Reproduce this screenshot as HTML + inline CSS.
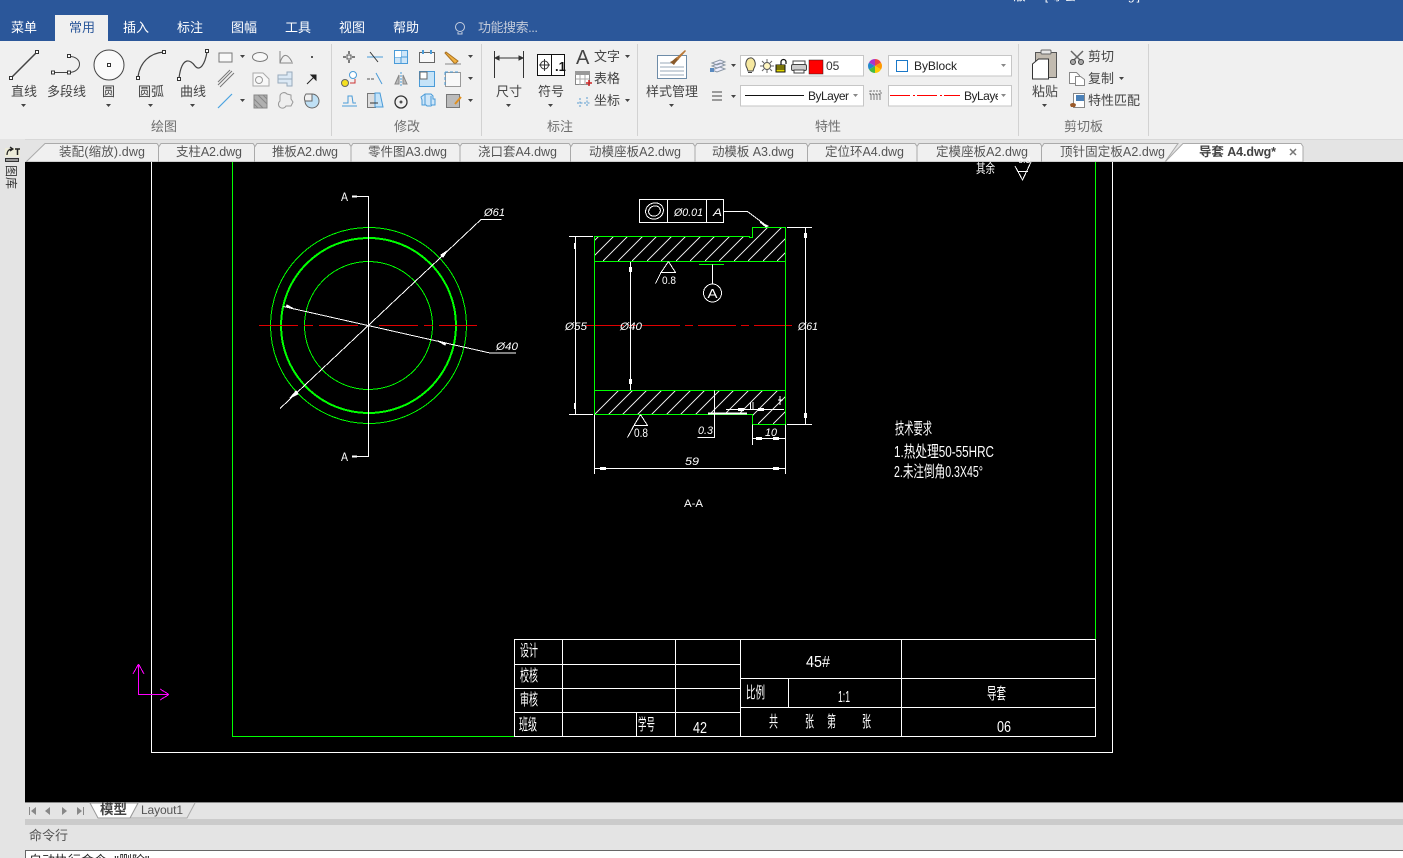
<!DOCTYPE html>
<html lang="zh"><head><meta charset="utf-8"><title>导套 A4.dwg</title>
<style>
html,body{margin:0;padding:0;background:#000;overflow:hidden}
svg{display:block}
text{font-family:"Liberation Sans","Noto Sans CJK SC",sans-serif}
.m{font-size:13px;fill:#fff}
.r{font-size:13px;fill:#444}
.g{font-size:13px;fill:#6e6e6e}
.t{font-size:12.5px;fill:#555}
.b{font-size:12px;fill:#222}
.c{font-size:16px;fill:#fff}
.d{font-size:11px;fill:#fff;font-style:italic}
.k{font-size:12px;fill:#fff}
.cad line,.cad path,.cad rect,.cad circle,.cad ellipse{shape-rendering:crispEdges}
.w{stroke:#fff;stroke-width:1;fill:none}
.gr{stroke:#0f0;stroke-width:1;fill:none}
.gt{stroke:#0f0;stroke-width:2;fill:none}
.i{fill:none;stroke:#444;stroke-width:1}
.bl{fill:none;stroke:#4a9bd8;stroke-width:1}
</style></head>
<body>
<svg xmlns="http://www.w3.org/2000/svg" width="1403" height="858" viewBox="0 0 1403 858">
<!-- title bar -->
<rect width="1403" height="41" fill="#2b579a"/>
<text x="973" y="0" font-size="12" fill="#fff" textLength="167" lengthAdjust="spacing">2017 版 - [导套 A4.dwg]</text>
<rect x="55" y="15" width="53" height="27" fill="#f0f0f0"/>
<text class="m" x="11" y="32">菜单</text>
<text class="m" x="69" y="32" style="fill:#2b579a">常用</text>
<text class="m" x="123" y="32">插入</text>
<text class="m" x="177" y="32">标注</text>
<text class="m" x="231" y="32">图幅</text>
<text class="m" x="285" y="32">工具</text>
<text class="m" x="339" y="32">视图</text>
<text class="m" x="393" y="32">帮助</text>
<g fill="none" stroke="#c5cede"><circle cx="460" cy="27" r="4.5"/><path d="M458 32v2h4v-2"/></g>
<text class="m" x="478" y="32" style="fill:#c3cbda" textLength="60">功能搜索...</text>

<!-- ribbon -->
<rect y="41" width="1403" height="98" fill="#f0f0f0"/>
<g fill="#d2d2d2"><rect x="331" y="44" width="1" height="92"/><rect x="481" y="44" width="1" height="92"/><rect x="637" y="44" width="1" height="92"/><rect x="1018" y="44" width="1" height="92"/><rect x="1148" y="44" width="1" height="92"/></g>

<!-- draw group -->
<g fill="none" stroke="#444">
<path d="M11 78L37 52" stroke-width="1.5"/>
<path d="M53 72.500H69M69 56.500C83 56 83 72 69 72.500"/>
<circle cx="109" cy="65" r="15" fill="#fafafa"/>
<path d="M138 77C140 62 150 53 164 52" stroke-width="1.2"/>
<path d="M179 78C182 55 191 60 195 66C200 72 205 64 207 52" stroke-width="1.2"/>
</g>
<g fill="#fff" stroke="#333">
<rect x="9.500" y="76.500" width="3" height="3"/><rect x="35.500" y="50.500" width="3" height="3"/>
<rect x="51.500" y="71" width="3" height="3"/><rect x="67.500" y="71" width="3" height="3"/><rect x="67.500" y="54.500" width="3" height="3"/>
<rect x="107.500" y="63.500" width="3" height="3"/>
<rect x="136.500" y="76.500" width="3" height="3"/><rect x="162.500" y="50.500" width="3" height="3"/>
<rect x="177.500" y="77.500" width="3" height="3"/><rect x="205.500" y="49.500" width="3" height="3"/>
</g>
<text class="r" x="11" y="96">直线</text><text class="r" x="47" y="96">多段线</text><text class="r" x="102" y="96">圆</text><text class="r" x="138" y="96">圆弧</text><text class="r" x="180" y="96">曲线</text>
<g fill="#444"><path d="M21 104h5l-2.500 3z"/><path d="M106 104h5l-2.500 3z"/><path d="M148 104h5l-2.500 3z"/><path d="M190 104h5l-2.500 3z"/>
<path d="M240 55h5l-2.500 3z"/><path d="M240 99h5l-2.500 3z"/><path d="M468 55h5l-2.500 3z"/><path d="M468 77h5l-2.500 3z"/><path d="M468 99h5l-2.500 3z"/></g>
<text class="g" x="151" y="131">绘图</text>
<!-- small draw icons -->
<path d="M219 53h13v9h-13z" fill="#f8f8f8" stroke="#777"/>
<ellipse cx="260" cy="57" rx="7.500" ry="4.500" fill="#f8f8f8" stroke="#777"/>
<path d="M280 51v12h13M280 63C283 52 288 54 292 62" fill="none" stroke="#888"/>
<rect x="311" y="56" width="2" height="2" fill="#555"/>
<path d="M218 85L232 71M220 87L234 73M218 82L230 70" fill="none" stroke="#777" stroke-width="1"/>
<path d="M253 73h10l6 6v7h-16z" fill="#f8f8f8" stroke="#aaa"/><circle cx="259" cy="80" r="3.500" fill="none" stroke="#999"/>
<path d="M278 75h9v-3h5v14h-5v-3h-9z" fill="#dce9f5" stroke="#9ab"/><path d="M278 79h14" stroke="#9ab"/>
<path d="M307 84l8-8" stroke="#222"/><path d="M311 75h5v5z" stroke="#222" fill="#222"/>
<path d="M218 108L232 94" stroke="#4aa3e0" stroke-width="1.200"/>
<rect x="254" y="95" width="13" height="13" fill="#b0b0b0" stroke="#888"/><path d="M254 99l9 9M258 95l9 9M254 104l4 4M263 95l4 4" stroke="#888"/>
<path d="M280 97a4 4 0 0 1 7-3l4 1v4l2 3-2 4h-5a4 4 0 1 1-6-5z" fill="#eee" stroke="#999"/>
<circle cx="312" cy="101" r="7" fill="#bfe0f5" stroke="#666"/><path d="M312 101V94H306A7 7 0 0 0 305 101z" fill="#f0f0f0" stroke="#666"/>

<!-- modify icons -->
<g fill="none" stroke="#555">
<rect x="347" y="55" width="4" height="4"/><path d="M349 51v3M349 60v3M343 57h3M352 57h3" stroke-width="1.500"/>
<path d="M367 57h16" stroke="#4a9bd8"/><path d="M370 52l8 10" stroke="#333"/>
<rect x="394.500" y="50.500" width="13" height="13" fill="#cfe6f8" stroke="#4a9bd8"/><path d="M401 50v14M394 57h14" stroke="#4a9bd8"/><rect x="395" y="51" width="6" height="6" fill="#fff" stroke="none"/>
<rect x="419.500" y="52.500" width="15" height="10" fill="#f8f8f8" stroke="#666"/><path d="M423 50v4M431 50v4" stroke="#4a9bd8" stroke-width="2"/>
<path d="M446 52l12 9-3 3-10-11z" fill="#f0b040" stroke="#a87020"/><path d="M445 64h16" stroke="#888"/>
<circle cx="345" cy="83" r="3.500" fill="#f4e020" stroke="#666"/><circle cx="353" cy="75" r="3.500" fill="#fff" stroke="#4a9bd8"/><path d="M350 83h5v-4" stroke="#c33"/>
<path d="M367 79h8" stroke="#555" stroke-dasharray="3 1"/><path d="M376 73l6 11" stroke="#4a9bd8"/>
<path d="M395 84l4-9v9zM403 75l4 9h-4z" fill="#bbb" stroke="#888"/><path d="M401 72v14" stroke="#4a9bd8" stroke-dasharray="2 1"/>
<rect x="419.500" y="71.500" width="15" height="15" fill="#c5e3f8" stroke="#4a9bd8"/><rect x="420" y="72" width="7" height="7" fill="#fff" stroke="#666"/>
<rect x="445.500" y="72.500" width="15" height="14" fill="#f8f8f8" stroke="#999"/><path d="M445 72h15" stroke="#4a9bd8" stroke-dasharray="3 2"/><path d="M445 72v14" stroke="#4a9bd8" stroke-dasharray="3 2"/>
<path d="M342 106h15M343 103h5v-7h4l1 7h3" stroke="#4a9bd8"/>
<rect x="367.500" y="93.500" width="8" height="14" fill="#ddd" stroke="#777"/><path d="M375 93h5l3 14h-8z" fill="#c5e3f8" stroke="#4a9bd8"/><path d="M370 103h8" stroke="#333"/>
<circle cx="401" cy="102" r="6" stroke="#333" stroke-width="1.300"/><circle cx="401" cy="102" r="1" fill="#333"/>
<path d="M421 97l4-3h6l2 2v3h2v6h-3l-1 1h-4l-1-1h-4v-5z" fill="#cfe6f8" stroke="#4a9bd8"/><path d="M425 94v11M431 96v9" stroke="#4a9bd8"/>
<rect x="446.500" y="94.500" width="13" height="13" fill="#bbb" stroke="#777"/><path d="M455 104l6-7" stroke="#e09020" stroke-width="2"/>
</g>
<text class="g" x="394" y="131">修改</text>

<!-- annotate -->
<g fill="none" stroke="#333">
<path d="M494.500 51v27M523.500 51v27M495 58h28"/><path d="M495 58l4-2v4zM523 58l-4-2v4z" fill="#333"/>
<rect x="537.500" y="54.500" width="27" height="21" fill="#fff" stroke="#111"/><path d="M551.500 54v21" stroke="#111"/>
<circle cx="544.500" cy="65" r="4"/><path d="M539 65h11M544.500 59v12"/>
</g>
<text x="555" y="71" font-size="13" font-weight="bold" fill="#111">.1</text>
<text x="576" y="64" font-size="20" fill="#444">A</text>
<text class="r" x="594" y="61">文字</text><text class="r" x="594" y="83">表格</text><text class="r" x="594" y="105">坐标</text>
<g fill="#444"><path d="M625 55h5l-2.500 3z"/><path d="M625 99h5l-2.500 3z"/><path d="M506 104h5l-2.500 3z"/><path d="M548 104h5l-2.500 3z"/><path d="M669 104h5l-2.500 3z"/><path d="M731 64h5l-2.500 3z"/><path d="M731 95h5l-2.500 3z"/><path d="M1042 104h5l-2.500 3z"/><path d="M1119 77h5l-2.500 3z"/><path d="M853 64h5l-2.500 3z" fill="#888"/></g>
<rect x="575.500" y="71.500" width="14" height="13" fill="#fff" stroke="#888"/><rect x="575" y="71" width="15" height="4" fill="#999"/><path d="M580 75v10M585 75v10M576 79h13" stroke="#aaa"/><path d="M586 83h6M589 80v6" stroke="#c22" stroke-width="1.500"/>
<path d="M580 98v10M587 97v10M577 103h13" stroke="#5a9bd0" stroke-dasharray="2 1.500" fill="none"/>
<text class="r" x="496" y="96">尺寸</text><text class="r" x="538" y="96">符号</text>
<text class="g" x="547" y="131">标注</text>

<!-- style -->
<rect x="657.500" y="55.500" width="29" height="23" fill="#fff" stroke="#6e8ca8"/>
<path d="M660 63h13M660 67h24M660 71h24M660 75h24" stroke="#98a8b8"/>
<path d="M670 62c3-1 5-4 7-5l2 2c-2 2-4 4-5 6z" fill="#8a5a2a"/><path d="M676 58l9-8 1 1-8 9z" fill="#b87838"/>
<text class="r" x="646" y="96">样式管理</text>

<!-- properties -->
<g fill="none" stroke="#8a96a4"><path d="M712 63l8-3 5 2-8 3zM712 66l8-3 5 2-8 3zM712 70l8-3 5 2-8 3z" fill="#eef"/></g><rect x="710" y="68" width="4" height="4" fill="#5a8ac0"/>
<path d="M712 92h10M712 96h10M712 100h10" stroke="#444"/>
<g fill="#fff" stroke="#c6c6c6"><rect x="740.500" y="55.500" width="123" height="20.500"/><rect x="888.500" y="55.500" width="123" height="20.500"/><rect x="740.500" y="85.500" width="123" height="20.500"/><rect x="888.500" y="85.500" width="123" height="20.500"/></g>
<path d="M750 58a4.500 6 0 0 1 4 10l-1 3h-5l-1-3a4.500 6 0 0 1 3-10z" fill="#f6e8a0" stroke="#444"/><path d="M748 72.500h4" stroke="#444"/>
<circle cx="767" cy="66" r="3.500" fill="#fff6c0" stroke="#555"/><path d="M767 59v3M767 70v3M760 66h3M771 66h3M762 61l2 2M770 69l2 2M772 61l-2 2M764 69l-2 2" stroke="#666"/>
<rect x="776" y="65" width="9" height="7" fill="#e2d800" stroke="#111"/><path d="M776 67h9M776 69h9" stroke="#111"/><path d="M781 65v-3a2.500 2.500 0 0 1 5 0v2" fill="none" stroke="#111" stroke-width="1.200"/>
<path d="M793 61h12v4h-12z" fill="#fff" stroke="#444"/><rect x="791.500" y="64.500" width="15" height="6" rx="1.500" fill="#ccc" stroke="#444"/><path d="M794 70h10v3h-10z" fill="#fff" stroke="#444"/>
<rect x="809" y="60" width="14" height="14" fill="#f00" stroke="#222" stroke-width=".5"/>
<text x="826" y="70" font-size="12" fill="#333">05</text>
<circle cx="875" cy="66" r="3.500" fill="#fff"/><path d="M875 59a7 7 0 0 1 6 3.500l-6 3.500z" fill="#e44"/><path d="M881 62.500a7 7 0 0 1 0 7L875 66z" fill="#f90"/><path d="M881 69.500a7 7 0 0 1-6 3.500V66z" fill="#fc0"/><path d="M875 73a7 7 0 0 1-6-3.500L875 66z" fill="#4b4"/><path d="M869 69.500a7 7 0 0 1 0-7L875 66z" fill="#28c"/><path d="M869 62.500a7 7 0 0 1 6-3.500V66z" fill="#a3c"/>
<rect x="896.500" y="60.500" width="11" height="11" fill="#fff" stroke="#1a78c8"/>
<text x="914" y="70" class="b" textLength="43">ByBlock</text>
<path d="M1001 64h5l-2.500 3zM853 94h5l-2.500 3zM1001 94h5l-2.500 3z" fill="#888"/>
<rect x="745" y="95" width="59" height="1" fill="#111"/>
<text x="808" y="100" class="b" textLength="41">ByLayer</text>
<path d="M870 91h11v3h-11zM870 95h11M870 97h11M870 99h11" fill="none" stroke="#777" stroke-dasharray="2 1"/>
<g fill="#f00"><rect x="890" y="95" width="20" height="1"/><rect x="913" y="95" width="2" height="1"/><rect x="917" y="95" width="20" height="1"/><rect x="940" y="95" width="2" height="1"/><rect x="944" y="95" width="16" height="1"/></g>
<svg x="964" y="85" width="34" height="20"><text x="0" y="15" class="b" textLength="41">ByLayer</text></svg>
<text class="g" x="815" y="131">特性</text>

<!-- clipboard -->
<rect x="1035.500" y="52.500" width="21" height="25" fill="#c2bbb0" stroke="#555"/><rect x="1041" y="50" width="10" height="4" rx="1" fill="#e8e8e8" stroke="#666"/>
<path d="M1032.500 64l6-5h10v20h-16z" fill="#fff" stroke="#333"/>
<text class="r" x="1032" y="96">粘贴</text>
<text class="r" x="1088" y="61">剪切</text><text class="r" x="1088" y="83">复制</text><text class="r" x="1088" y="105">特性匹配</text>
<path d="M1071 51l11 11M1083 51l-11 11" stroke="#666" stroke-width="1.500"/><circle cx="1073" cy="62" r="2.500" fill="#aaa" stroke="#444"/><circle cx="1081" cy="62" r="2.500" fill="#aaa" stroke="#444"/>
<path d="M1069.500 72.500h7l3 3v8h-10z" fill="#fff" stroke="#888"/><path d="M1075.500 76.500h5l4 3v6h-9z" fill="#fff" stroke="#888"/>
<rect x="1073.500" y="93.500" width="11" height="14" fill="#fff" stroke="#888"/><rect x="1076" y="95" width="8" height="6" fill="#4a80b8"/><path d="M1070 105a3 2 0 0 1 6 0l-1 2h-4z" fill="#9a5a2a"/>
<text class="g" x="1064" y="131">剪切板</text>

<!-- tab strip -->
<rect y="139" width="1403" height="23" fill="#e4e4e4"/>
<rect y="139" width="1403" height="1" fill="#d8d8d8"/>
<path d="M26 162L45 143.500H157l2 3 2-3H253l2 3 2-3H349l2 3 2-3H458l2 3 2-3H569l2 3 2-3H693l2 3 2-3H806l2 3 2-3H915l2 3 2-3H1040l2 3 2-3H1178L1165 162z" fill="#f0f0f0" stroke="#aaa"/>
<path d="M158.500 146v16M254.500 146v16M351 146v16M460 146v16M570.500 146v16M695 146v16M807.500 146v16M917 146v16M1041.500 146v16" stroke="#aaa"/>
<path d="M1165 162L1183 143.500H1301l2 3V162z" fill="#fff" stroke="#aaa"/>
<text class="t" x="59" y="156" textLength="86" lengthAdjust="spacing">装配(缩放).dwg</text>
<text class="t" x="176" y="156" textLength="66">支柱A2.dwg</text>
<text class="t" x="272" y="156" textLength="66">推板A2.dwg</text>
<text class="t" x="368" y="156" textLength="79">零件图A3.dwg</text>
<text class="t" x="478" y="156" textLength="79">浇口套A4.dwg</text>
<text class="t" x="589" y="156" textLength="92">动模座板A2.dwg</text>
<text class="t" x="712" y="156" textLength="82">动模板 A3.dwg</text>
<text class="t" x="825" y="156" textLength="79">定位环A4.dwg</text>
<text class="t" x="936" y="156" textLength="92">定模座板A2.dwg</text>
<text class="t" x="1060" y="156" textLength="105">顶针固定板A2.dwg</text>
<text x="1199" y="156" font-size="12.500" font-weight="bold" fill="#444" textLength="77">导套 A4.dwg*</text>
<path d="M1290 149l6 6M1296 149l-6 6" stroke="#777" stroke-width="1.500"/>

<!-- left bar -->
<rect y="139" width="25" height="719" fill="#e4e4e4"/>
<rect x="5" y="148" width="15" height="9" fill="#edecd8"/>
<path d="M7 155c0-4 2-6 5-6M10 147l3 2-3 2" fill="none" stroke="#222" stroke-width="1.200"/><path d="M15 149h5M17.500 149v6" stroke="#222" stroke-width="1.500"/>
<rect x="5.500" y="158.500" width="13" height="3" fill="#999" stroke="#333"/>
<text transform="translate(7,165) rotate(90)" font-size="12" fill="#333">图库</text>

<!-- canvas -->
<rect x="25" y="162" width="1378" height="640" fill="#000"/>
<g class="cad">
<path class="w" d="M151.500 162V752.500H1112.500V162"/>
<path class="gr" d="M232.500 162V736.500H515M1095.500 162V639"/>
<!-- title block -->
<path class="w" d="M514.500 639.500H1095.500V736.500H514.500zM562.500 639.500V736.500M675.500 639.500V736.500M740.500 639.500V736.500M636.500 712.500V736.500M788.500 678.500V707.500M901.500 639.500V736.500M514.500 664.500H740.500M514.500 688.500H740.500M514.500 712.500H740.500M740.500 678.500H1095.500M740.500 707.500H1095.500"/>
<!-- left view -->
<circle cx="368.500" cy="325.500" r="98" class="gr"/>
<circle cx="368.500" cy="325.500" r="87.500" class="gt"/>
<circle cx="368.500" cy="325.500" r="64" class="gr"/>
<path d="M259 325.500h39M304 325.500h9M319 325.500h39M379 325.500h39M424 325.500h9M439 325.500h38" stroke="#e00000" fill="none"/>
<path class="w" d="M352 196.500H368.500V456.500H352"/>
<path class="w" d="M280 408.500L481 219.500H501.500"/>
<path class="w" d="M283.500 306.500L490 353H516"/>
<path d="M290 398l6-7 2 3zM447 251l-6 4 2 2zM294 309l-8-2 1-2zM438 341l8 2-1 2z" fill="#fff" stroke="#fff"/>
<path d="M352 195.500h5v2h-5zM352 455.500h5v2h-5z" fill="#fff"/>
<!-- right view hatch -->
<clipPath id="h1"><path d="M595 237H750V237H752V228H785V261H595z"/></clipPath>
<clipPath id="h2"><path d="M595 390H785V424H752V414H595z"/></clipPath>
<g clip-path="url(#h1)"><path class="w" d="M574 261l34-34M589 261l34-34M603 261l34-34M618 261l34-34M632 261l34-34M647 261l34-34M661 261l34-34M676 261l34-34M690 261l34-34M705 261l34-34M719 261l34-34M734 261l34-34M748 261l34-34M763 261l34-34M777 261l34-34M792 261l34-34M806 261l34-34" style="stroke:#ddd"/></g>
<g clip-path="url(#h2)"><path class="w" d="M585 424l34-34M599 424l34-34M613 424l34-34M628 424l34-34M642 424l34-34M657 424l34-34M671 424l34-34M686 424l34-34M700 424l34-34M715 424l34-34M729 424l34-34M744 424l34-34M758 424l34-34M773 424l34-34M787 424l34-34M802 424l34-34" style="stroke:#ddd"/></g>
<!-- right view outline -->
<path d="M586 325.500H797" stroke="#e00000" stroke-dasharray="38 5 8 5" fill="none"/>
<path class="w" d="M569 236.500H593M575.500 236.500V414.500M569 414.500H593M624 261.500H639M630.500 261.500V390.500M624 390.500H639M787 227.500H812M805.500 227.500V424.500M787 424.500H812"/>
<path class="gr" d="M594.500 236.500H749.500V237.500H752.500V227.500H785.500V424.500H752.500V414.500H594.500zM594.500 261.500H785.500M594.500 390.500H785.500"/>
<g fill="#fff"><rect x="574" y="243" width="2" height="6"/><rect x="629" y="267" width="3" height="5"/><rect x="629" y="379" width="3" height="5"/><rect x="804" y="233" width="3" height="5"/><rect x="804" y="413" width="3" height="5"/><rect x="574" y="403" width="2" height="6"/></g>
<!-- feature control -->
<path class="w" d="M639.500 199.500H723.500V222.500H639.500zM667.500 199.500V222.500M706.500 199.500V222.500M723.500 211.500H747.500L767.500 226.500"/>
<ellipse cx="654.500" cy="211" rx="9" ry="8" class="w" transform="rotate(-20 654.500 211)"/><ellipse cx="654.500" cy="211" rx="6" ry="5" class="w" transform="rotate(-20 654.500 211)"/>
<path d="M760 222l8 4-2 1z" fill="#fff" stroke="#fff"/>
<!-- finish top & datum -->
<path class="w" d="M668.500 261.500L675.500 272.500H661L668.500 261.500M661 272.500L655.500 283.500"/>
<path class="gr" d="M699 264.500H724"/>
<path class="w" d="M712.500 264.500V284.500"/>
<circle cx="712.500" cy="293" r="9" class="w"/>
<!-- bottom finish & dims -->
<path class="w" d="M640.500 414.500L647.500 425.500H634L640.500 414.500M634 425.500L627.500 437.500"/>
<path class="w" d="M714.500 390.500V437.500H697.500"/>
<path d="M708 412.500h39v2h-39z" fill="#fff"/>
<path class="w" d="M726 409.500H784"/>
<rect x="738" y="408" width="6" height="3" fill="#fff"/><rect x="758" y="408" width="6" height="3" fill="#fff"/>
<path class="w" d="M752.500 424.500V445M785.500 424.500V474M594.500 414.500V474M752.500 438.500H785.500M594.500 468.500H785.500"/>
<g fill="#fff"><rect x="756" y="437" width="6" height="3"/><rect x="773" y="437" width="6" height="3"/><rect x="600" y="467" width="6" height="3"/><rect x="773" y="467" width="6" height="3"/></g>
<path class="w" d="M750.500 402V410M753 402V410M780 396V405M778 400H783"/>
<!-- top-right rest -->
<path class="w" d="M1015 166L1022.500 180L1031 162M1018 171.500H1028"/>
<!-- ucs -->
<path d="M138.500 664V694.500H169" fill="none" stroke="#f0f" stroke-width="1"/>
<path d="M138.500 664L133 674M138.500 664L144 674M169 694.500L160 689M169 694.500L160 700" fill="none" stroke="#f0f"/>
</g>
<!-- CAD text -->
<text class="k" x="341" y="201" textLength="7" lengthAdjust="spacingAndGlyphs">A</text>
<text class="k" x="341" y="461" textLength="7" lengthAdjust="spacingAndGlyphs">A</text>
<text class="d" x="484" y="216" textLength="21" lengthAdjust="spacingAndGlyphs">Ø61</text>
<text class="d" x="496" y="350" textLength="22" lengthAdjust="spacingAndGlyphs">Ø40</text>
<text class="d" x="565" y="330" textLength="22" lengthAdjust="spacingAndGlyphs">Ø55</text>
<text class="d" x="620" y="330" textLength="22" lengthAdjust="spacingAndGlyphs">Ø40</text>
<text class="d" x="798" y="330" textLength="20" lengthAdjust="spacingAndGlyphs">Ø61</text>
<text class="d" x="674" y="216" textLength="29" lengthAdjust="spacingAndGlyphs">Ø0.01</text>
<text class="d" x="713" y="216" textLength="9" lengthAdjust="spacingAndGlyphs">A</text>
<text x="662" y="284" font-size="11" fill="#fff" textLength="14" lengthAdjust="spacingAndGlyphs">0.8</text>
<text x="634" y="437" font-size="12" fill="#fff" textLength="14" lengthAdjust="spacingAndGlyphs">0.8</text>
<text x="707.500" y="298" font-size="13" fill="#fff" textLength="10" lengthAdjust="spacingAndGlyphs">A</text>
<text class="d" x="698" y="434" textLength="15" lengthAdjust="spacingAndGlyphs">0.3</text>
<text class="d" x="765" y="436" textLength="12" lengthAdjust="spacingAndGlyphs">10</text>
<text class="d" x="685" y="465" textLength="14" lengthAdjust="spacingAndGlyphs">59</text>
<text x="684" y="507" font-size="11" fill="#fff" textLength="19" lengthAdjust="spacingAndGlyphs">A-A</text>
<text x="976" y="173" font-size="13" fill="#fff" textLength="19" lengthAdjust="spacingAndGlyphs">其余</text>
<text x="1018" y="163" font-size="9" fill="#fff">6.3</text>
<text x="895" y="434" font-size="16" fill="#fff" textLength="37" lengthAdjust="spacingAndGlyphs">技术要求</text>
<text x="894" y="457" font-size="16" fill="#fff" textLength="100" lengthAdjust="spacingAndGlyphs">1.热处理50-55HRC</text>
<text x="894" y="477" font-size="16" fill="#fff" textLength="89" lengthAdjust="spacingAndGlyphs">2.未注倒角0.3X45°</text>
<g>
<text class="c" x="520" y="656" textLength="18" lengthAdjust="spacingAndGlyphs">设计</text>
<text class="c" x="520" y="681" textLength="18" lengthAdjust="spacingAndGlyphs">校核</text>
<text class="c" x="520" y="705" textLength="18" lengthAdjust="spacingAndGlyphs">审核</text>
<text class="c" x="519" y="730" textLength="18" lengthAdjust="spacingAndGlyphs">班级</text>
<text class="c" x="638" y="730" textLength="17" lengthAdjust="spacingAndGlyphs">学号</text>
<text class="c" x="693" y="733" textLength="14" lengthAdjust="spacingAndGlyphs">42</text>
<text class="c" x="806" y="667" textLength="24" lengthAdjust="spacingAndGlyphs">45#</text>
<text class="c" x="746" y="698" textLength="19" lengthAdjust="spacingAndGlyphs">比例</text>
<text class="c" x="838" y="702" textLength="12" lengthAdjust="spacingAndGlyphs">1:1</text>
<text class="c" x="987" y="699" textLength="19" lengthAdjust="spacingAndGlyphs">导套</text>
<text class="c" x="769" y="727" textLength="9" lengthAdjust="spacingAndGlyphs">共</text>
<text class="c" x="805" y="727" textLength="9" lengthAdjust="spacingAndGlyphs">张</text>
<text class="c" x="827" y="727" textLength="9" lengthAdjust="spacingAndGlyphs">第</text>
<text class="c" x="862" y="727" textLength="9" lengthAdjust="spacingAndGlyphs">张</text>
<text class="c" x="997" y="732" textLength="14" lengthAdjust="spacingAndGlyphs">06</text>
</g>

<!-- bottom bar -->
<rect x="0" y="802" width="1403" height="56" fill="#e4e4e4"/>
<rect x="25" y="802" width="1378" height="1" fill="#888"/>
<g fill="#888"><path d="M29 807h1v8h-1zM36 807v8l-5-4zM50 807v8l-5-4zM62 807v8l5-4zM77 807v8l5-4zM83 807h1v8h-1z"/></g>
<path d="M138 803L130 818H187L195 803" fill="none" stroke="#aaa"/>
<path d="M90 803H138L130 818H98z" fill="#fff" stroke="#999"/>
<text x="100" y="814" font-size="13.500" font-weight="bold" fill="#444">模型</text>
<text x="141" y="814" font-size="12" fill="#555" textLength="42">Layout1</text>
<rect x="25" y="819" width="1378" height="6" fill="#cbcbcb"/>
<text x="29" y="840" font-size="13" fill="#555">命令行</text>
<rect x="25.500" y="850.500" width="1378" height="12" fill="#fff" stroke="#666"/>
<text x="29" y="865" font-size="13" fill="#222">自动执行命令: "删除"</text>
</svg>
</body></html>
